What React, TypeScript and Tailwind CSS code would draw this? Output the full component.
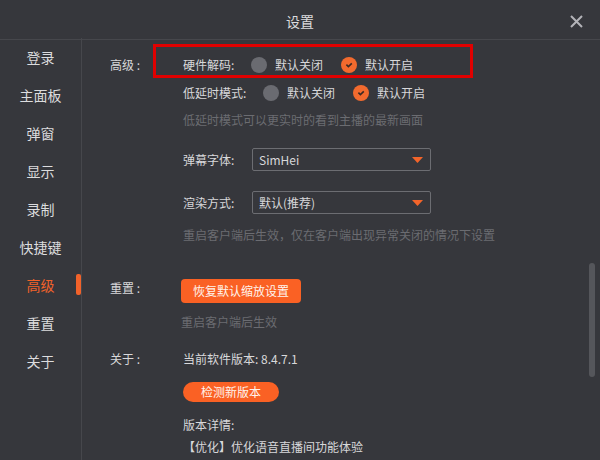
import { useState } from "react";

const menu = ["登录", "主面板", "弹窗", "显示", "录制", "快捷键", "高级", "重置", "关于"];

function Radio({ checked }: { checked: boolean }) {
  if (!checked) {
    return <span className="w-4 h-4 rounded-full bg-[#6a6b71] shrink-0" />;
  }
  return (
    <span className="w-4 h-4 rounded-full bg-[#f26a2e] shrink-0 flex items-center justify-center">
      <svg width="10" height="10" viewBox="0 0 10 10">
        <path d="M2.4 4.6 L4.4 6.6 L7.8 3.4" fill="none" stroke="#3a2a24" strokeWidth="1.6" />
      </svg>
    </span>
  );
}

function RadioRow({
  label,
  labelWidth,
  value,
}: {
  label: string;
  labelWidth: string;
  value: boolean;
}) {
  return (
    <div className="flex items-center h-[22px]">
      <span className={`${labelWidth} shrink-0`}>{label}</span>
      <Radio checked={!value} />
      <span className="ml-2 w-[48px]">默认关闭</span>
      <span className="ml-[18px]" />
      <Radio checked={value} />
      <span className="ml-2">默认开启</span>
    </div>
  );
}

function Select({ label, value }: { label: string; value: string }) {
  return (
    <div className="flex items-center h-[23px]">
      <span className="w-[69px] shrink-0">{label}</span>
      <div className="w-[179px] h-[23px] border border-[#6c6d72] rounded-[2px] flex items-center justify-between pl-[6px] pr-[7px]">
        <span>{value}</span>
        <svg width="11" height="6" viewBox="0 0 11 6">
          <path d="M0 0 H11 L5.5 6 Z" fill="#f3642a" />
        </svg>
      </div>
    </div>
  );
}

export default function App() {
  const [active] = useState("高级");

  return (
    <div className="w-[600px] h-[460px] bg-[#36373c] text-[#d8d8da] text-[12px] leading-[18px] font-['Noto_Sans_CJK_SC','Noto_Sans',sans-serif] flex flex-col overflow-hidden">
      {/* header */}
      <div className="h-10 shrink-0 border-b border-[#46474c] grid grid-cols-[1fr_auto_1fr] items-center pt-[3px]">
        <span />
        <span className="text-[14px] text-[#dcdcde]">设置</span>
        <div className="flex justify-end pr-[17px]">
          <svg width="13" height="13" viewBox="0 0 13 13">
            <path d="M1 1 L12 12 M12 1 L1 12" stroke="#b3b3b8" strokeWidth="2" />
          </svg>
        </div>
      </div>

      <div className="flex flex-1 min-h-0">
        {/* sidebar */}
        <div className="w-[82px] shrink-0 border-r border-[#46474c] -mt-[2px] flex flex-col">
          {menu.map((m) => (
            <div
              key={m}
              className={`relative h-[38px] flex items-center justify-center text-[14px] ${
                m === active ? "text-[#f2622a]" : "text-[#dcdcde]"
              }`}
            >
              {m}
              {m === active && (
                <span className="absolute right-0 top-[8px] w-[5px] h-[21px] rounded-[2px] bg-[#f2622a]" />
              )}
            </div>
          ))}
        </div>

        {/* content */}
        <div className="relative flex-1 pl-[28px] flex flex-col">
          {/* 高级 */}
          <div className="flex mt-[14px]">
            <span className="w-[73px] shrink-0 h-[22px] flex items-center">高级 :</span>
            <div className="flex flex-col">
              <div className="relative">
                <RadioRow label="硬件解码:" labelWidth="w-[68px]" value={true} />
                <span className="absolute left-[-30px] top-[-10px] w-[320px] h-[34px] border-[3px] border-[#e00000] pointer-events-none" />
              </div>
              <div className="mt-[6px]">
                <RadioRow label="低延时模式:" labelWidth="w-[80px]" value={true} />
              </div>
              <p className="mt-[7px] text-[#6b6c71]">低延时模式可以更实时的看到主播的最新画面</p>
              <div className="mt-[19px]">
                <Select label="弹幕字体:" value="SimHei" />
              </div>
              <div className="mt-[20px]">
                <Select label="渲染方式:" value="默认(推荐)" />
              </div>
              <p className="mt-[12px] text-[#6b6c71]">重启客户端后生效，仅在客户端出现异常关闭的情况下设置</p>
            </div>
          </div>

          {/* 重置 */}
          <div className="flex mt-[35px]">
            <span className="w-[71px] shrink-0">重置 :</span>
            <div className="flex flex-col">
              <button className="w-[120px] h-[24px] rounded-[4px] bg-[#fa6124] text-[#fff3ec] text-[12px]">
                恢复默认缩放设置
              </button>
              <p className="mt-[10px] text-[#6b6c71]">重启客户端后生效</p>
            </div>
          </div>

          {/* 关于 */}
          <div className="flex mt-[19px]">
            <span className="w-[73px] shrink-0">关于 :</span>
            <div className="flex flex-col">
              <span>当前软件版本: 8.4.7.1</span>
              <button className="mt-[14px] w-[96px] h-[20px] rounded-full bg-[#fa6124] text-[#fff3ec] text-[12px] leading-[20px]">
                检测新版本
              </button>
              <span className="mt-[14px]">版本详情:</span>
              <span className="mt-[4px]">【优化】优化语音直播间功能体验</span>
            </div>
          </div>

          {/* scroll thumb */}
          <span className="absolute right-[5px] top-[223px] w-[6px] h-[114px] rounded-full bg-[#55565b]" />
        </div>
      </div>
    </div>
  );
}
